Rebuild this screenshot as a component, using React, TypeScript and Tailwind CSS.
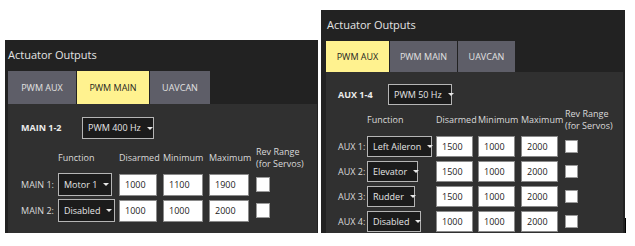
import React from 'react';

function Caret() {
  return (
    <svg width="6" height="3" viewBox="0 0 6 3" className="shrink-0">
      <path d="M0 0h6L3 3z" fill="#e8e8e8" />
    </svg>
  );
}

function Dropdown({ label, className }: { label: string; className: string }) {
  return (
    <div
      className={`flex items-center justify-between gap-[6px] border border-[#b5b5b5] bg-[#1b1b1b] pl-[5px] pr-[6px] text-[#e6e6e6] ${className}`}
    >
      <span className="whitespace-nowrap">{label}</span>
      <Caret />
    </div>
  );
}

function Field({ value, className }: { value: string; className: string }) {
  return (
    <div className={`flex items-center border border-[#8a8a8a] bg-white pl-[5px] text-[#1a1a1a] ${className}`}>
      {value}
    </div>
  );
}

function Check({ className }: { className: string }) {
  return <div className={`border border-[#9a9a9a] bg-white ${className}`} />;
}

function Tab({ label, active, className }: { label: string; active?: boolean; className: string }) {
  return (
    <div
      className={`flex items-center justify-center ${
        active ? 'bg-[#fff28f] text-[#1e1e1e]' : 'bg-[#5e5e68] text-[#e2e2e2]'
      } ${className}`}
    >
      {label}
    </div>
  );
}

const mainRows = [
  { label: 'MAIN 1:', fn: 'Motor 1', fnW: 'w-[54px]', vals: ['1000', '1100', '1900'] },
  { label: 'MAIN 2:', fn: 'Disabled', fnW: 'w-[57px]', vals: ['1000', '1000', '2000'] },
];

const auxRows = [
  { label: 'AUX 1:', fn: 'Left Aileron', fnW: 'w-[65px]', vals: ['1500', '1000', '2000'] },
  { label: 'AUX 2:', fn: 'Elevator', fnW: 'w-[51px]', vals: ['1500', '1000', '2000'] },
  { label: 'AUX 3:', fn: 'Rudder', fnW: 'w-[48px]', vals: ['1500', '1000', '2000'] },
  { label: 'AUX 4:', fn: 'Disabled', fnW: 'w-[54px]', vals: ['1000', '1000', '2000'] },
];

function Headers() {
  return (
    <>
      <span />
      <span>Function</span>
      <span className="whitespace-nowrap">Disarmed</span>
      <span className="whitespace-nowrap">Minimum</span>
      <span className="whitespace-nowrap">Maximum</span>
      <div className="flex flex-col leading-[12px] whitespace-nowrap">
        <span>Rev Range</span>
        <span>(for Servos)</span>
      </div>
    </>
  );
}

export default function App() {
  return (
    <div className="flex h-[246px] w-[635px] items-start bg-white font-['Open_Sans',sans-serif] text-[9px] text-[#dadada]">
      {/* PWM MAIN panel */}
      <div className="ml-[5px] mt-[40px] flex h-[193px] w-[313px] flex-col bg-[#222222] pl-[3px] pr-[1px]">
        <div className="flex h-[31px] items-center text-[11px] text-[#e4e4e4]">Actuator Outputs</div>
        <div className="flex h-[33px] gap-px">
          <Tab label="PWM AUX" className="w-[68px]" />
          <Tab label="PWM MAIN" active className="w-[72px]" />
          <Tab label="UAVCAN" className="w-[60px]" />
        </div>
        <div className="flex-1 bg-[#303030] pl-[12px] pt-[13px]">
          <div className="flex items-center">
            <span className="w-[62px] pl-px font-bold text-[#ececec]">MAIN 1-2</span>
            <Dropdown label="PWM 400 Hz" className="h-[22px] w-[72px]" />
          </div>
          <div className="mt-[7px] grid grid-cols-[38px_61px_44px_46px_47px_auto] grid-rows-[24px_23px_23px] items-center gap-y-[3px]">
            <Headers />
            {mainRows.map((r) => (
              <React.Fragment key={r.label}>
                <span className="pr-[4px] text-right whitespace-nowrap">{r.label}</span>
                <Dropdown label={r.fn} className={`h-[23px] ${r.fnW}`} />
                <Field value={r.vals[0]} className="h-[22px] w-[38px]" />
                <Field value={r.vals[1]} className="h-[22px] w-[40px]" />
                <Field value={r.vals[2]} className="h-[22px] w-[40px]" />
                <Check className="h-[15px] w-[14px]" />
              </React.Fragment>
            ))}
          </div>
        </div>
      </div>

      {/* PWM AUX panel */}
      <div className="ml-[3px] mt-[10px] flex h-[223px] w-[304px] flex-col bg-[#222222] pl-[5px] pr-[2px]">
        <div className="flex h-[31px] items-center pl-px text-[11px] text-[#e4e4e4]">Actuator Outputs</div>
        <div className="flex h-[31px] gap-px">
          <Tab label="PWM AUX" active className="w-[63px]" />
          <Tab label="PWM MAIN" className="w-[67px]" />
          <Tab label="UAVCAN" className="w-[57px]" />
        </div>
        <div className="flex-1 bg-[#303030] pl-[12px] pt-[12px]">
          <div className="flex items-center">
            <span className="w-[50px] font-bold text-[#ececec]">AUX 1-4</span>
            <Dropdown label="PWM 50 Hz" className="h-[21px] w-[64px]" />
          </div>
          <div className="mt-[3px] grid grid-cols-[29px_69px_42px_43px_44px_auto] grid-rows-[24px_21px_21px_21px_21px] items-center gap-y-[4px]">
            <Headers />
            {auxRows.map((r) => (
              <React.Fragment key={r.label}>
                <span className="pr-[4px] text-right whitespace-nowrap">{r.label}</span>
                <Dropdown label={r.fn} className={`h-[21px] ${r.fnW}`} />
                <Field value={r.vals[0]} className="h-[21px] w-[37px]" />
                <Field value={r.vals[1]} className="h-[21px] w-[37px]" />
                <Field value={r.vals[2]} className="h-[21px] w-[37px]" />
                <Check className="h-[13px] w-[13px]" />
              </React.Fragment>
            ))}
          </div>
        </div>
      </div>
      <div className="mt-[218px] h-[15px] w-px bg-black" />
    </div>
  );
}
